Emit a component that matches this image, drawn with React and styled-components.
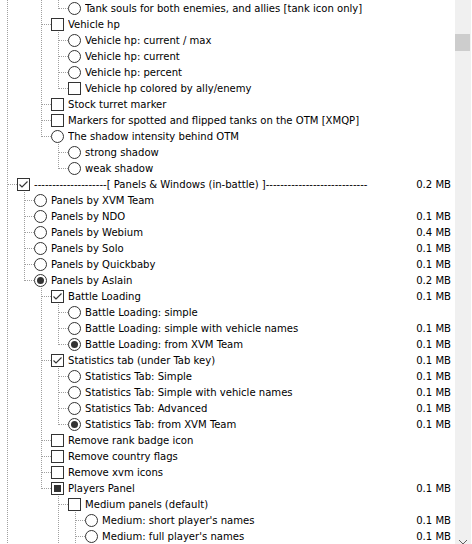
import React from "react";
import styled, { createGlobalStyle } from "styled-components";

const GlobalStyle = createGlobalStyle`
  html, body {
    margin: 0;
    padding: 0;
    background: #ffffff;
  }
  body {
    font-family: "DejaVu Sans Condensed", "Liberation Sans", Arial, sans-serif;
    font-size: 11.2px;
    color: #000000;
  }
`;

const Window = styled.div`
  display: flex;
  width: 472px;
  height: 544px;
  overflow: hidden;
  background: #ffffff;
`;

const List = styled.div`
  flex: 1;
  display: flex;
  flex-direction: column;
  overflow: hidden;
`;

const Row = styled.div`
  display: flex;
  align-items: flex-start;
  height: 16px;
  flex-shrink: 0;
  white-space: nowrap;
`;

const Guides = styled.div`
  display: flex;
  flex-shrink: 0;
  height: 16px;
`;

const Guide = styled.svg`
  display: block;
  width: 17px;
  height: 16px;
`;

const CheckBox = styled.div`
  box-sizing: border-box;
  width: 13px;
  height: 13px;
  margin-top: 2px;
  flex-shrink: 0;
  border: 1px solid #333333;
  background: #ffffff;
  display: flex;
  align-items: center;
  justify-content: center;
`;

const Mixed = styled.div`
  width: 7px;
  height: 7px;
  background: #333333;
`;

const Radio = styled.div`
  box-sizing: border-box;
  width: 13px;
  height: 13px;
  margin-top: 2px;
  flex-shrink: 0;
  border: 1px solid #333333;
  border-radius: 50%;
  background: #ffffff;
  display: flex;
  align-items: center;
  justify-content: center;
`;

const Dot = styled.div`
  width: 7px;
  height: 7px;
  border-radius: 50%;
  background: #333333;
`;

const Label = styled.span`
  flex: 1;
  margin-left: 4px;
  line-height: 18px;
  overflow: hidden;
`;

const Size = styled.span`
  flex-shrink: 0;
  padding-right: 4px;
  line-height: 18px;
`;

const Scrollbar = styled.div`
  width: 16px;
  margin-right: 1px;
  background: #f0f0f0;
  display: flex;
  flex-direction: column;
  justify-content: space-between;
`;

const Thumb = styled.div`
  margin-top: 34px;
  width: 15px;
  height: 17px;
  background: #cdcdcd;
`;

const DOTS = "#a0a0a0";

const rows = [
  { l: 4, t: "r", label: "Tank souls for both enemies, and allies [tank icon only]" },
  { l: 3, t: "c", label: "Vehicle hp" },
  { l: 4, t: "r", label: "Vehicle hp: current / max" },
  { l: 4, t: "r", label: "Vehicle hp: current" },
  { l: 4, t: "r", label: "Vehicle hp: percent" },
  { l: 4, t: "c", label: "Vehicle hp colored by ally/enemy" },
  { l: 3, t: "c", label: "Stock turret marker" },
  { l: 3, t: "c", label: "Markers for spotted and flipped tanks on the OTM [XMQP]" },
  { l: 3, t: "r", label: "The shadow intensity behind OTM" },
  { l: 4, t: "r", label: "strong shadow" },
  { l: 4, t: "r", label: "weak shadow" },
  {
    l: 1,
    t: "c",
    on: true,
    label: "--------------------[ Panels & Windows (in-battle) ]----------------------------",
    size: "0.2 MB",
  },
  { l: 2, t: "r", label: "Panels by XVM Team" },
  { l: 2, t: "r", label: "Panels by NDO", size: "0.1 MB" },
  { l: 2, t: "r", label: "Panels by Webium", size: "0.4 MB" },
  { l: 2, t: "r", label: "Panels by Solo", size: "0.1 MB" },
  { l: 2, t: "r", label: "Panels by Quickbaby", size: "0.1 MB" },
  { l: 2, t: "r", on: true, label: "Panels by Aslain", size: "0.2 MB" },
  { l: 3, t: "c", on: true, label: "Battle Loading", size: "0.1 MB" },
  { l: 4, t: "r", label: "Battle Loading: simple" },
  { l: 4, t: "r", label: "Battle Loading: simple with vehicle names", size: "0.1 MB" },
  { l: 4, t: "r", on: true, label: "Battle Loading: from XVM Team", size: "0.1 MB" },
  { l: 3, t: "c", on: true, label: "Statistics tab (under Tab key)", size: "0.1 MB" },
  { l: 4, t: "r", label: "Statistics Tab: Simple", size: "0.1 MB" },
  { l: 4, t: "r", label: "Statistics Tab: Simple with vehicle names", size: "0.1 MB" },
  { l: 4, t: "r", label: "Statistics Tab: Advanced", size: "0.1 MB" },
  { l: 4, t: "r", on: true, label: "Statistics Tab: from XVM Team", size: "0.1 MB" },
  { l: 3, t: "c", label: "Remove rank badge icon" },
  { l: 3, t: "c", label: "Remove country flags" },
  { l: 3, t: "c", label: "Remove xvm icons" },
  { l: 3, t: "c", mixed: true, label: "Players Panel", size: "0.1 MB" },
  { l: 4, t: "c", label: "Medium panels (default)" },
  { l: 5, t: "r", label: "Medium: short player's names", size: "0.1 MB" },
  { l: 5, t: "r", label: "Medium: full player's names", size: "0.1 MB" },
];

// items scrolled out of view, above and below, so the tree lines connect
const head = [{ l: 1 }, { l: 2 }, { l: 3 }];
const tail = [{ l: 5 }, { l: 4 }, { l: 1 }];
const all = [...head, ...rows, ...tail];

const isLast = (i) => {
  for (let j = i + 1; j < all.length; j++) {
    if (all[j].l <= all[i].l) return all[j].l < all[i].l;
  }
  return true;
};

const guidesFor = (i) => {
  const L = all[i].l;
  const out = [];
  for (let lvl = 1; lvl < L; lvl++) {
    let k = i - 1;
    while (k >= 0 && all[k].l !== lvl) k--;
    out.push(k >= 0 && !isLast(k) ? "pipe" : "none");
  }
  out.push(isLast(i) ? "end" : "tee");
  return out;
};

const GuideCell = ({ kind }) => (
  <Guide viewBox="0 0 17 16">
    {kind === "pipe" && (
      <line x1="7.5" y1="0" x2="7.5" y2="16" stroke={DOTS} strokeDasharray="1 1" shapeRendering="crispEdges" />
    )}
    {(kind === "tee" || kind === "end") && (
      <>
        <line
          x1="7.5"
          y1="0"
          x2="7.5"
          y2={kind === "tee" ? 16 : 9}
          stroke={DOTS}
          strokeDasharray="1 1"
          shapeRendering="crispEdges"
        />
        <line x1="8" y1="8.5" x2="17" y2="8.5" stroke={DOTS} strokeDasharray="1 1" shapeRendering="crispEdges" />
      </>
    )}
  </Guide>
);

const Mark = ({ row }) => {
  if (row.t === "r") return <Radio>{row.on && <Dot />}</Radio>;
  return (
    <CheckBox>
      {row.mixed && <Mixed />}
      {row.on && (
        <svg width="11" height="11" viewBox="0 0 11 11">
          <polyline points="1.5,5.5 4,8 9.5,2.5" fill="none" stroke="#333333" strokeWidth="1.1" />
        </svg>
      )}
    </CheckBox>
  );
};

export default function App() {
  return (
    <>
      <GlobalStyle />
      <Window>
        <List>
          {rows.map((row, n) => {
            const i = n + head.length;
            return (
              <Row key={n}>
                <Guides>
                  {guidesFor(i).map((g, k) => (
                    <GuideCell key={k} kind={g} />
                  ))}
                </Guides>
                <Mark row={row} />
                <Label>{row.label}</Label>
                {row.size && <Size>{row.size}</Size>}
              </Row>
            );
          })}
        </List>
        <Scrollbar>
          <Thumb />
          <svg width="16" height="5" viewBox="0 0 16 5">
            <polyline points="4,1 8,5 12,1" fill="none" stroke="#606060" strokeWidth="1" />
          </svg>
        </Scrollbar>
      </Window>
    </>
  );
}
